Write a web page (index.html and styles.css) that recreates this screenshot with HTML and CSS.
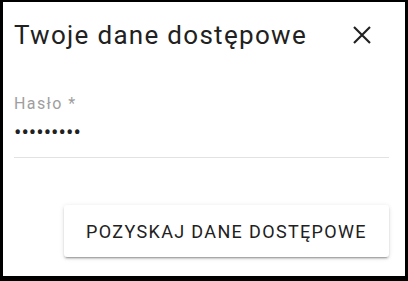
FILE: index.html
```html
<!DOCTYPE html>
<html lang="pl">
<head>
<meta charset="utf-8">
<title>Twoje dane dostępowe</title>
<link rel="stylesheet" href="styles.css">
</head>
<body>
<div class="frame">
  <div class="header">
    <h1 class="title">Twoje dane dostępowe</h1>
    <button class="close" aria-label="Zamknij">
      <svg viewBox="0 0 24 24" width="30" height="30"><path d="M5.6 5.6L18.4 18.4M18.4 5.6L5.6 18.4" stroke="#212121" stroke-width="1.7" fill="none"/></svg>
    </button>
  </div>
  <div class="field">
    <label class="label" for="pw">Hasło *</label>
    <input id="pw" class="input" type="password" value="123456789">
  </div>
  <div class="actions">
    <button class="btn">POZYSKAJ DANE DOSTĘPOWE</button>
  </div>
</div>
</body>
</html>
```
FILE: styles.css
```css
html, body {
  margin: 0;
  padding: 0;
  background: #fff;
}
.frame {
  width: 408px;
  height: 281px;
  box-sizing: border-box;
  border: 3px solid #000;
  border-top-width: 2px;
  border-bottom-width: 5px;
  background: #fff;
  font-family: Roboto, "Liberation Sans", sans-serif;
  display: flex;
  flex-direction: column;
  padding: 19px 16px 0 11px;
}
.header {
  display: flex;
  justify-content: space-between;
  align-items: center;
  height: 28px;
}
.title {
  margin: 0;
  font-size: 26px;
  line-height: 28px;
  font-weight: 400;
  letter-spacing: 1.3px;
  color: #212121;
}
.close {
  border: none;
  background: none;
  padding: 0;
  margin-right: 12px;
  width: 30px;
  height: 30px;
  display: flex;
  align-items: center;
  justify-content: center;
}
.field {
  margin-top: 46px;
  display: flex;
  flex-direction: column;
  border-bottom: 1px solid #e2e2e2;
}
.label {
  font-size: 16px;
  line-height: 18px;
  letter-spacing: 1.4px;
  color: #9e9e9e;
}
.input {
  border: none;
  outline: none;
  padding: 0;
  margin: 8px 0 12px;
  font-family: Roboto, "Liberation Sans", sans-serif;
  font-size: 22px;
  line-height: 24px;
  height: 24px;
  color: #212121;
  background: transparent;
}
.actions {
  display: flex;
  justify-content: flex-end;
  margin-top: 47px;
}
.btn {
  width: 325px;
  height: 52px;
  border: none;
  border-radius: 3px;
  background: #fff;
  font-family: Roboto, "Liberation Sans", sans-serif;
  font-size: 18px;
  font-weight: 400;
  letter-spacing: 1.35px;
  color: #212121;
  box-shadow: 0 3px 1px -2px rgba(0,0,0,0.2), 0 2px 2px 0 rgba(0,0,0,0.14), 0 1px 5px 0 rgba(0,0,0,0.12);
}
```
